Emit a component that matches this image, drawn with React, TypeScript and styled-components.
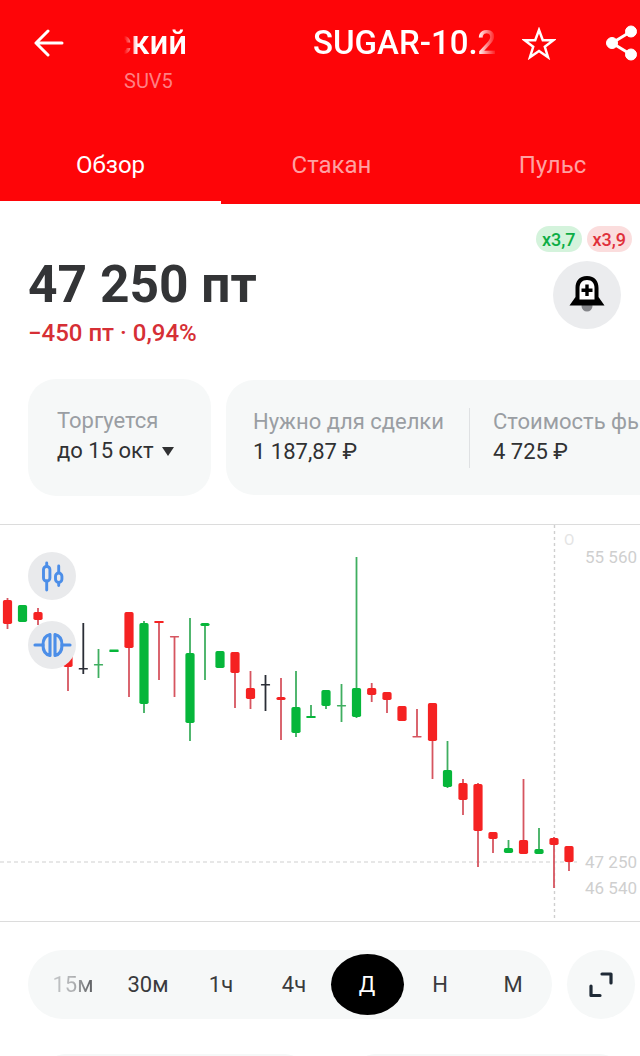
import React from "react";
import styled, { createGlobalStyle } from "styled-components";

const Global = createGlobalStyle`
  html, body { margin: 0; padding: 0; background: #fff; }
  * { box-sizing: border-box; }
  body { font-family: Roboto, "Liberation Sans", sans-serif; }
`;

const Page = styled.div`
  width: 640px;
  height: 1056px;
  overflow: hidden;
  background: #fff;
`;

const Header = styled.header`
  height: 204px;
  background: #fe0508;
  overflow: hidden;
`;

const TopRow = styled.div`
  display: flex;
  align-items: flex-start;
  height: 125px;
  padding-top: 23px;
`;

const BackButton = styled.div`
  width: 124px;
  height: 40px;
  padding-left: 34px;
  display: flex;
  align-items: center;
  flex-shrink: 0;
`;

const TitleBlock = styled.div`
  width: 373px;
  flex-shrink: 0;
`;

const Marquee = styled.div`
  display: flex;
  justify-content: space-between;
  height: 40px;
  line-height: 40px;
  overflow: hidden;
  white-space: nowrap;
  color: #fff;
  font-size: 33px;
  font-weight: 500;
  -webkit-mask-image: linear-gradient(90deg, transparent 0, #000 13px, #000 354px, transparent 373px);
  mask-image: linear-gradient(90deg, transparent 0, #000 13px, #000 354px, transparent 373px);
`;

const TitleName = styled.span`
  margin-left: -10px;
`;

const TitleTicker = styled.span`
  display: block;
  width: 184px;
  flex-shrink: 0;
`;

const Ticker = styled.div`
  margin-top: 6px;
  font-size: 20px;
  line-height: 24px;
  color: #ff7f83;
`;

const StarButton = styled.div`
  width: 109px;
  height: 40px;
  padding-left: 25px;
  display: flex;
  align-items: center;
  flex-shrink: 0;
`;

const ShareButton = styled.div`
  height: 40px;
  display: flex;
  align-items: center;
  flex-shrink: 0;
`;

const Tabs = styled.nav`
  display: grid;
  grid-template-columns: repeat(3, 221px);
  height: 79px;
`;

const Tab = styled.div<{ $active?: boolean }>`
  display: flex;
  justify-content: center;
  padding-top: 24px;
  font-size: 24px;
  line-height: 32px;
  color: ${(p) => (p.$active ? "#fff" : "#ffa0a2")};
  border-bottom: 3px solid ${(p) => (p.$active ? "#fff" : "transparent")};
`;

const PriceSection = styled.section`
  display: flex;
  justify-content: space-between;
  height: 175px;
  padding: 22px 8px 0 28px;
`;

const PriceColumn = styled.div`
  padding-top: 29px;
`;

const Price = styled.div`
  font-size: 51.5px;
  line-height: 60px;
  font-weight: 700;
  color: #333436;
`;

const Delta = styled.div`
  margin-top: 3px;
  font-size: 24px;
  line-height: 30px;
  font-weight: 500;
  color: #d62f35;
`;

const SideColumn = styled.div`
  width: 96px;
`;

const Badges = styled.div`
  display: flex;
  gap: 5px;
`;

const Badge = styled.span<{ $up?: boolean }>`
  flex: 1;
  height: 26px;
  border-radius: 13px;
  display: flex;
  align-items: center;
  justify-content: center;
  font-size: 18px;
  font-weight: 500;
  color: ${(p) => (p.$up ? "#0cad44" : "#e0303a")};
  background: ${(p) => (p.$up ? "#d4f3dc" : "#fbdddd")};
`;

const BellButton = styled.div`
  width: 68px;
  height: 68px;
  margin: 9px 0 0 17px;
  border-radius: 50%;
  background: #ebecee;
  display: flex;
  align-items: center;
  justify-content: center;
`;

const Cards = styled.section`
  display: flex;
  gap: 15px;
  padding-left: 28px;
  align-items: flex-start;
`;

const Card = styled.div`
  height: 117px;
  width: 183px;
  flex-shrink: 0;
  border-radius: 28px;
  background: #f6f8f8;
  padding: 28px 0 0 29px;
`;

const WideCard = styled.div`
  height: 115px;
  width: 460px;
  margin-top: 1px;
  flex-shrink: 0;
  display: flex;
  border-radius: 28px;
  background: #f6f8f8;
  padding: 28px 0 0 27px;
`;

const WideCell = styled.div<{ $divided?: boolean }>`
  white-space: nowrap;
  flex-shrink: 0;
  ${(p) => (p.$divided ? "width: 217px;" : "padding-left: 23px;")}
  position: relative;
  ${(p) =>
    p.$divided
      ? `&::after { content: ""; position: absolute; right: 0; top: 0; height: 60px; width: 1px; background: #dfe1e3; }`
      : ""}
`;

const Label = styled.div`
  font-size: 22px;
  line-height: 28px;
  color: #9a9ea3;
  white-space: nowrap;
`;

const Value = styled.div`
  margin-top: 2px;
  font-size: 22px;
  line-height: 28px;
  color: #303133;
  display: flex;
  align-items: center;
  gap: 8px;
`;

const Caret = styled.span`
  width: 0;
  height: 0;
  border-left: 6px solid transparent;
  border-right: 6px solid transparent;
  border-top: 9px solid #303133;
`;

const ChartBox = styled.section`
  position: relative;
  margin-top: 28px;
  height: 398px;
  border-top: 1px solid #dcdcdc;
  border-bottom: 1px solid #dcdcdc;
`;

const ChartSvg = styled.svg`
  display: block;
  width: 640px;
  height: 396px;
`;

const ChartTool = styled.div<{ $top: number }>`
  position: absolute;
  left: 28px;
  top: ${(p) => p.$top}px;
  width: 48px;
  height: 48px;
  border-radius: 50%;
  background: #e9eaec;
  display: flex;
`;

const Controls = styled.section`
  display: flex;
  gap: 15px;
  padding-left: 28px;
  margin-top: 28px;
`;

const Periods = styled.div`
  width: 524px;
  height: 69px;
  padding: 4px 0 4px 10.5px;
  border-radius: 35px;
  background: #f6f8f8;
  display: grid;
  grid-template-columns: repeat(7, 73px);
`;

const Period = styled.div<{ $active?: boolean }>`
  display: flex;
  align-items: center;
  justify-content: center;
  font-size: 22px;
  border-radius: 50% / 50%;
  color: ${(p) => (p.$active ? "#fff" : "#3a3b3d")};
  background: ${(p) => (p.$active ? "#000" : "transparent")};
`;

const FadedLabel = styled.span`
  margin-right: 4px;
  background: linear-gradient(90deg, #c4c6c8 0%, #b0b2b4 50%, #55575a 100%);
  -webkit-background-clip: text;
  background-clip: text;
  color: transparent;
`;

const ExpandButton = styled.div`
  width: 68px;
  height: 69px;
  border-radius: 50%;
  background: #f6f8f8;
  display: flex;
  align-items: center;
  justify-content: center;
`;

const Footer = styled.div`
  display: grid;
  grid-template-columns: 260px 265px;
  gap: 50px;
  padding-left: 45px;
  margin-top: 35px;
`;

const FooterCard = styled.div`
  height: 40px;
  border-radius: 20px;
  background: #f6f8f8;
`;

type C = [number, number, number, number, number, "r" | "g" | "k"];
// x, wickTop, wickBottom, bodyTop, bodyBottom, colour
const candles: C[] = [
  [7.5, 598, 629, 600, 624, "r"],
  [22.5, 605, 622, 605, 622, "g"],
  [38, 608, 625, 612, 620, "r"],
  [68, 650, 691, 650, 667, "r"],
  [83.3, 623, 674, 668, 669.5, "k"],
  [98.5, 649, 678, 664, 665.5, "g"],
  [114, 650, 651, 649.5, 652, "g"],
  [129, 612, 697, 612, 648, "r"],
  [144, 621, 713, 623, 704, "g"],
  [159, 621, 680, 621, 623, "r"],
  [174.5, 636, 697, 636, 637.3, "r"],
  [190, 618, 741, 653, 723, "g"],
  [205, 624, 680, 623, 626, "g"],
  [220, 651, 668, 651, 668, "g"],
  [235, 652, 708, 652, 673, "r"],
  [250.5, 671, 709, 688, 699, "r"],
  [265.5, 675, 711, 684, 685.5, "k"],
  [281, 678, 740, 697, 700, "r"],
  [296, 671, 737, 707, 733, "g"],
  [311, 705, 718, 716, 718, "g"],
  [326, 690, 709, 690, 706, "g"],
  [341.5, 684, 722, 705, 706.3, "g"],
  [356.5, 557, 718, 688, 717, "g"],
  [371.7, 683, 702, 688, 695, "r"],
  [387, 692, 713, 692, 700, "r"],
  [402, 706, 721, 706, 721, "r"],
  [417, 709, 737, 736, 737.3, "r"],
  [432.5, 703, 779, 703, 741, "r"],
  [447.5, 741, 788, 770, 787, "g"],
  [463, 779, 815, 783, 800, "r"],
  [478, 783, 867, 784, 831, "r"],
  [493, 832, 853, 832, 839, "r"],
  [508.5, 840, 853, 848, 853, "g"],
  [523.5, 779, 854, 840, 854, "r"],
  [539, 828, 854, 849, 854, "g"],
  [554, 837, 888, 838, 845, "r"],
  [569, 846, 871, 846, 862, "r"],
];

const bodyFill = { r: "#f52222", g: "#06b63a", k: "#1c1f26" };
const wickFill = { r: "#d65560", g: "#3fae60", k: "#2a2d36" };

const Chart = () => (
  <ChartSvg viewBox="0 525 640 396">
    <line x1="554.5" y1="525" x2="554.5" y2="921" stroke="#cfcfcf" strokeWidth="1.4" strokeDasharray="3 3" />
    <line x1="0" y1="862" x2="577" y2="862" stroke="#cfcfcf" strokeWidth="1" strokeDasharray="4 3" />
    {candles.map(([x, wt, wb, bt, bb, c], i) => {
      const thin = bb - bt < 2;
      return (
        <g key={i}>
          <rect x={x - 0.9} y={wt} width={1.8} height={wb - wt} fill={wickFill[c]} />
          <rect
            x={x - 4.6}
            y={bt}
            width={9.2}
            height={Math.max(bb - bt, 1.4)}
            rx={bb - bt < 3 ? 0.6 : 1.8}
            fill={thin ? wickFill[c] : bodyFill[c]}
          />
        </g>
      );
    })}
    <text x="564" y="545" fontFamily="Roboto" fontSize="15" fill="#e4e4e4">О</text>
    <g fontFamily="Roboto" fontSize="17" fill="#cfcfcf">
      <text x="585" y="563">55 560</text>
      <text x="585" y="868">47 250</text>
      <text x="585" y="894">46 540</text>
    </g>
  </ChartSvg>
);

const CandleIcon = () => (
  <svg width="48" height="48" viewBox="0 0 48 48" fill="none" stroke="#4c8ee8" strokeWidth="2.9" strokeLinecap="round">
    <path d="M18.7 11V14M18.7 29V38" />
    <rect x="15.5" y="14.5" width="6.4" height="14.5" rx="3" />
    <path d="M30.7 14V20M30.7 31V33.5" />
    <rect x="27.5" y="21" width="6.4" height="9.5" rx="3.2" />
  </svg>
);

const CompareIcon = () => (
  <svg width="48" height="48" viewBox="0 0 48 48" fill="none" stroke="#4c8ee8" strokeWidth="3.1" strokeLinecap="round" strokeLinejoin="round">
    <path d="M7 24H15" />
    <path d="M22 13.5V34.5C17.5 33.5 15 29.5 15 24C15 18.5 17.5 14.5 22 13.5Z" />
    <path d="M27 13.5V34.5C31.5 33.5 34 29.5 34 24C34 18.5 31.5 14.5 27 13.5Z" />
    <path d="M34 24H42" />
  </svg>
);

const BellIcon = () => (
  <svg width="36" height="38" viewBox="0 0 36 38">
    <circle cx="18" cy="30" r="5.5" fill="#85868a" />
    <path d="M18 0C10 0 6.5 5 6.5 12V21L0.5 29.5H35.5L29.5 21V12C29.5 5 26 0 18 0Z" fill="#000" />
    <path d="M18 4C13 4 10.5 7.5 10.5 12V23.5H25.5V12C25.5 7.5 23 4 18 4Z" fill="#fff" />
    <path d="M18 8.5V20M12.5 14.2H23.5" stroke="#000" strokeWidth="3.4" />
  </svg>
);

const App = () => (
  <Page>
    <Global />
    <Header>
      <TopRow>
        <BackButton>
          <svg width="30" height="28" viewBox="0 0 30 28" fill="none" stroke="#fff" strokeWidth="3" strokeLinecap="round" strokeLinejoin="round">
            <path d="M14 2L2 14L14 26M2 14H28" />
          </svg>
        </BackButton>
        <TitleBlock>
          <Marquee>
            <TitleName>ский</TitleName>
            <TitleTicker>SUGAR-10.25</TitleTicker>
          </Marquee>
          <Ticker>SUV5</Ticker>
        </TitleBlock>
        <StarButton>
          <svg width="34" height="33" viewBox="0 0 34 33" fill="none" stroke="#fff" strokeWidth="2.5" strokeLinejoin="miter">
            <path d="M17 3L20.8 13.2H31.5L22.8 19.8L26 30.2L17 24L8 30.2L11.2 19.8L2.5 13.2H13.2Z" />
          </svg>
        </StarButton>
        <ShareButton>
          <svg width="36" height="36" viewBox="0 0 36 36" fill="#fff" stroke="#fff">
            <circle cx="6" cy="18" r="5.5" />
            <circle cx="25" cy="6.5" r="5.5" />
            <circle cx="25" cy="29.5" r="5.5" />
            <path d="M6 18L25 6.5M6 18L25 29.5" strokeWidth="3" fill="none" />
          </svg>
        </ShareButton>
      </TopRow>
      <Tabs>
        <Tab $active>Обзор</Tab>
        <Tab>Стакан</Tab>
        <Tab>Пульс</Tab>
      </Tabs>
    </Header>
    <PriceSection>
      <PriceColumn>
        <Price>47 250 пт</Price>
        <Delta>−450 пт · 0,94%</Delta>
      </PriceColumn>
      <SideColumn>
        <Badges>
          <Badge $up>x3,7</Badge>
          <Badge>x3,9</Badge>
        </Badges>
        <BellButton>
          <BellIcon />
        </BellButton>
      </SideColumn>
    </PriceSection>
    <Cards>
      <Card>
        <Label>Торгуется</Label>
        <Value>
          до 15 окт <Caret />
        </Value>
      </Card>
      <WideCard>
        <WideCell $divided>
          <Label>Нужно для сделки</Label>
          <Value>1 187,87 ₽</Value>
        </WideCell>
        <WideCell>
          <Label>Стоимость фьючерса</Label>
          <Value>4 725 ₽</Value>
        </WideCell>
      </WideCard>
    </Cards>
    <ChartBox>
      <Chart />
      <ChartTool $top={27}>
        <CandleIcon />
      </ChartTool>
      <ChartTool $top={96}>
        <CompareIcon />
      </ChartTool>
    </ChartBox>
    <Controls>
      <Periods>
        <Period><FadedLabel>15м</FadedLabel></Period>
        <Period>30м</Period>
        <Period>1ч</Period>
        <Period>4ч</Period>
        <Period $active>Д</Period>
        <Period>Н</Period>
        <Period>М</Period>
      </Periods>
      <ExpandButton>
        <svg width="24" height="26" viewBox="0 0 24 26" fill="none" stroke="#1f2a36" strokeWidth="3.2" strokeLinecap="round" strokeLinejoin="round">
          <path d="M13 2H22V11" />
          <path d="M2 14V23.5H11" />
        </svg>
      </ExpandButton>
    </Controls>
    <Footer>
      <FooterCard />
      <FooterCard />
    </Footer>
  </Page>
);

export default App;
